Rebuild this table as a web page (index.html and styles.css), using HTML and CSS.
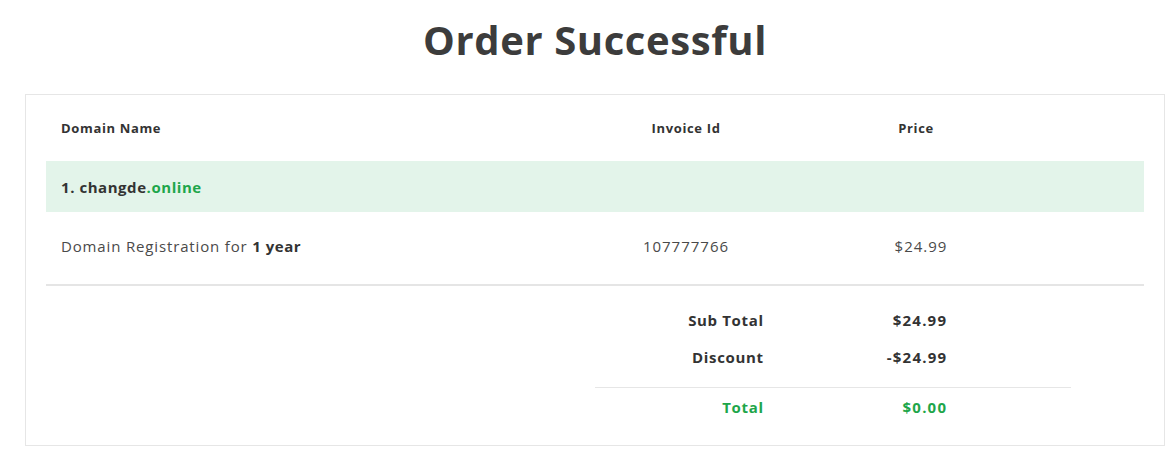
FILE: index.html
```html
<!DOCTYPE html>
<html>
<head>
<meta charset="utf-8">
<link rel="stylesheet" href="styles.css">
</head>
<body>
<main class="page">
  <h1 class="title">Order Successful</h1>
  <section class="card">
    <div class="row head">
      <div class="c-name">Domain Name</div>
      <div class="c-inv">Invoice Id</div>
      <div class="c-price">Price</div>
    </div>
    <div class="domain-row">1. changde<span class="tld">.online</span></div>
    <div class="row item">
      <div class="c-name">Domain Registration for <b>1 year</b></div>
      <div class="c-inv">107777766</div>
      <div class="c-price">$24.99</div>
    </div>
    <div class="totals">
      <div class="trow"><span class="lbl">Sub Total</span><span class="val">$24.99</span></div>
      <div class="trow"><span class="lbl">Discount</span><span class="val">-$24.99</span></div>
      <div class="trow grand"><span class="lbl">Total</span><span class="val">$0.00</span></div>
    </div>
  </section>
</main>
</body>
</html>
```

FILE: styles.css
```css
html, body { margin: 0; padding: 0; background: #fff; }
body { font-family: "Open Sans", "Liberation Sans", sans-serif; color: #3a3a3a; }
.page { padding: 0 9px 0 25px; }
.title {
  margin: 0; padding-top: 12px; height: 80px; box-sizing: border-box;
  text-align: center; font-size: 40px; font-weight: 700; color: #3c3c3c;
  letter-spacing: 0.6px; line-height: 56px;
}
.card {
  border: 1px solid #e6e6e6; padding: 0 20px; height: 352px; box-sizing: border-box;
  margin-top: 14px;
}
.row { display: grid; grid-template-columns: 549px 182px 278px 1fr; align-items: center; }
.head { height: 66px; font-size: 13px; font-weight: 700; color: #333; letter-spacing: 0.65px; }
.head .c-name { padding-left: 15px; }
.c-inv { text-align: center; }
.c-price { text-align: center; }
.domain-row {
  background: #e3f4ea; height: 51px; display: flex; align-items: center;
  padding-left: 15px; font-size: 15px; font-weight: 700; color: #333; letter-spacing: 0.55px;
}
.tld { color: #1ea64a; }
.item {
  height: 68px; padding-bottom: 4px;
  font-size: 15px; color: #4a4a4a; border-bottom: 2px solid #e5e5e5; letter-spacing: 0.85px;
}
.item .c-name { padding-left: 15px; }
.item b { color: #333; letter-spacing: 0.5px; }
.item .c-inv { letter-spacing: 1px; }
.item .c-price { padding-left: 10px; letter-spacing: 1px; }
.totals { margin-left: 549px; width: 476px; padding-top: 15px; }
.trow {
  display: grid; grid-template-columns: 168px 183px; height: 37px; align-items: center;
  font-size: 15px; font-weight: 700; color: #333; letter-spacing: 0.65px;
}
.lbl, .val { text-align: right; }
.val { letter-spacing: 1.2px; margin-right: -1.2px; }
.lbl { margin-right: -0.65px; }
.grand { border-top: 1px solid #e6e6e6; margin-top: 12px; height: 37px; color: #1ea64a; }
```
